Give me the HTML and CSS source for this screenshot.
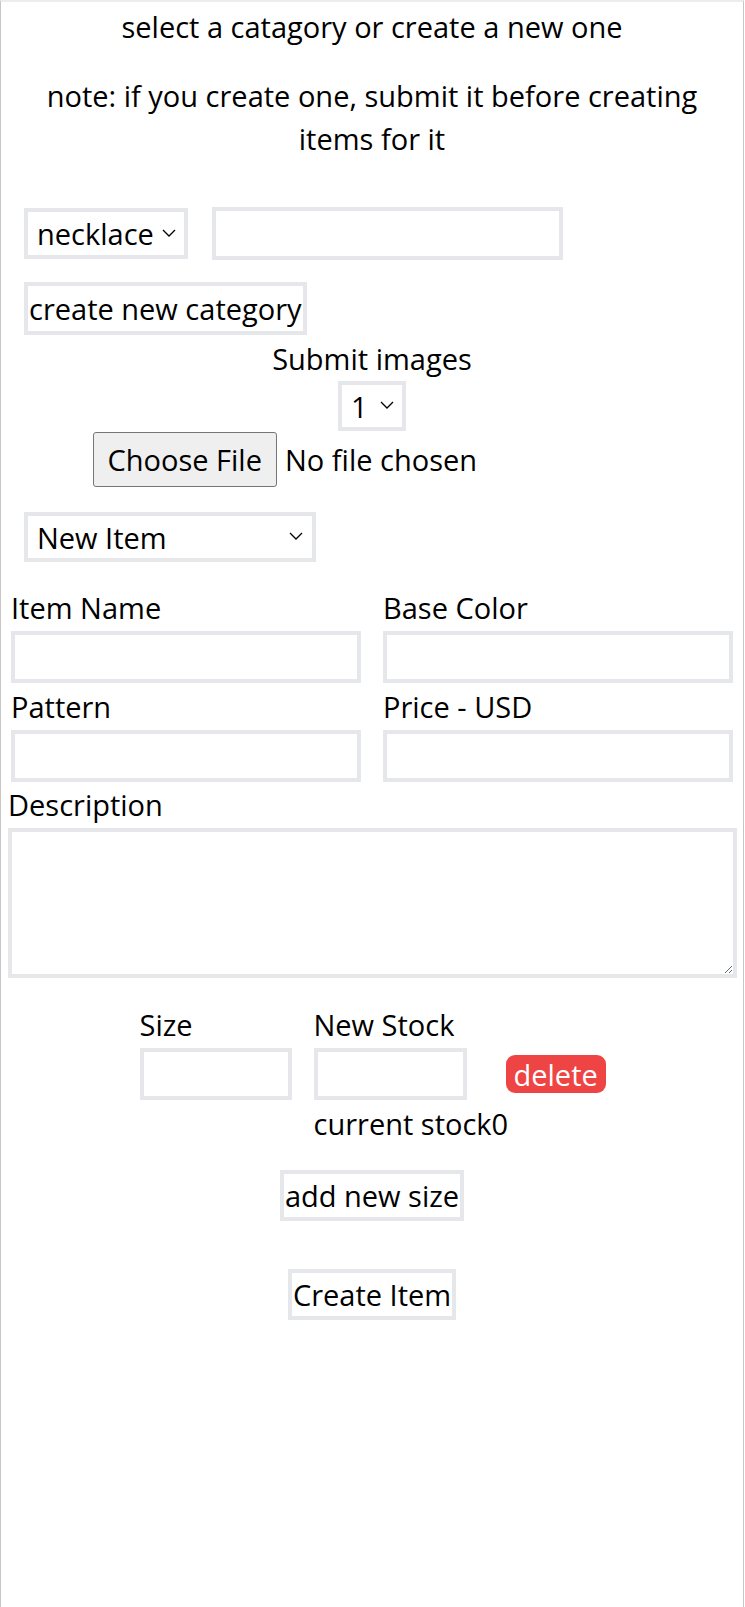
FILE: index.html
```html
<!DOCTYPE html>
<html lang="en">
<head>
<meta charset="utf-8">
<title>Create item</title>
<link rel="stylesheet" href="styles.css">
</head>
<body>
<div class="page">
  <p class="title">select a catagory or create a new one</p>
  <p class="note">note: if you create one, submit it before creating items for it</p>

  <div class="cat-row">
    <span class="select-wrap">
      <select class="field select select-cat"><option>necklace</option></select>
      <svg class="chev" width="14" height="8" viewBox="0 0 14 8" aria-hidden="true"><path d="M1 1 L7 7 L13 1" fill="none" stroke="#000" stroke-width="1.3"/></svg>
    </span>
    <input class="field input-cat" type="text">
  </div>
  <div class="left-row">
    <button class="btn btn-create" type="button">create new category</button>
  </div>

  <div class="images">
    <div class="images-label">Submit images</div>
    <span class="select-wrap num-wrap">
      <select class="field select select-num"><option>1</option></select>
      <svg class="chev" width="14" height="8" viewBox="0 0 14 8" aria-hidden="true"><path d="M1 1 L7 7 L13 1" fill="none" stroke="#000" stroke-width="1.3"/></svg>
    </span>
    <input class="file" type="file">
  </div>

  <div class="left-row item-row">
    <span class="select-wrap">
      <select class="field select select-item"><option>New Item</option></select>
      <svg class="chev chev-item" width="14" height="8" viewBox="0 0 14 8" aria-hidden="true"><path d="M1 1 L7 7 L13 1" fill="none" stroke="#000" stroke-width="1.3"/></svg>
    </span>
  </div>

  <div class="grid">
    <div class="cell"><label class="lbl">Item Name</label><input class="field" type="text"></div>
    <div class="cell"><label class="lbl">Base Color</label><input class="field" type="text"></div>
    <div class="cell"><label class="lbl">Pattern</label><input class="field" type="text"></div>
    <div class="cell"><label class="lbl">Price - USD</label><input class="field" type="text"></div>
  </div>

  <div class="desc">
    <label class="lbl">Description</label>
    <textarea class="field textarea"></textarea>
  </div>

  <div class="sizes">
    <label class="lbl">Size</label>
    <label class="lbl">New Stock</label>
    <span></span>
    <input class="field size-input" type="text">
    <input class="field stock-input" type="text">
    <button class="delete" type="button">delete</button>
    <span></span>
    <span class="current">current stock0</span>
    <span></span>
  </div>

  <div class="center-row add-row">
    <button class="btn" type="button">add new size</button>
  </div>
  <div class="center-row submit-row">
    <button class="btn" type="button">Create Item</button>
  </div>
</div>
</body>
</html>
```

FILE: styles.css
```css
html, body {
  margin: 0;
  padding: 0;
  background: #fff;
}

body {
  font-family: "Open Sans", "Noto Sans", sans-serif;
  font-size: 29px;
  color: #000;
}

.page {
  box-sizing: border-box;
  width: 744px;
  min-height: 100vh;
  border-top: 2px solid #ececec;
  border-left: 1px solid #c6c6c6;
  border-right: 1px solid #c6c6c6;
  display: flex;
  flex-direction: column;
}

.title {
  margin: 3px 0 0;
  line-height: 43px;
  text-align: center;
}

.note {
  margin: 26px 15px 0;
  line-height: 43px;
  text-align: center;
}

.field {
  box-sizing: border-box;
  font: inherit;
  color: #000;
  background: #fff;
  border: 4px solid #e6e7eb;
  border-radius: 0;
  margin: 0;
  padding: 0 8px;
  outline: none;
}

.select {
  appearance: none;
  -webkit-appearance: none;
  padding: 0 30px 0 9px;
}

.select-wrap {
  position: relative;
  display: inline-flex;
}

.chev {
  position: absolute;
  right: 12px;
  top: 50%;
  margin-top: -5px;
  pointer-events: none;
}

.chev-item {
  right: 13px;
}

.cat-row {
  margin-top: 47px;
  padding-left: 23px;
  display: flex;
  align-items: center;
  gap: 24px;
}

.select-cat {
  width: 164px;
  height: 51px;
}

.input-cat {
  width: 351px;
  height: 53px;
}

.left-row {
  padding-left: 23px;
  display: flex;
}

.btn {
  box-sizing: border-box;
  font: inherit;
  color: #000;
  background: #fff;
  border: 4px solid #e6e7eb;
  border-radius: 0;
  padding: 0 1px;
  margin: 0;
}

.btn-create {
  margin-top: 22px;
  height: 53px;
}

.images {
  display: flex;
  flex-direction: column;
  align-items: center;
}

.images-label {
  margin-top: 4px;
  line-height: 40px;
}

.num-wrap {
  margin-top: 2px;
}

.select-num {
  width: 68px;
  height: 50px;
}

.file {
  display: block;
  margin-top: 1px;
  width: 559px;
  height: 55px;
  font: inherit;
  color: #000;
}

.file::file-selector-button {
  font: inherit;
  color: #000;
  height: 55px;
  padding: 0 14px;
  margin: 0 8px 0 0;
  background: #efefef;
  border: 1px solid #767676;
  border-radius: 3px;
}

.item-row {
  margin-top: 25px;
}

.select-item {
  width: 292px;
  height: 50px;
}

.grid {
  margin-top: 26px;
  padding: 0 10px;
  display: grid;
  grid-template-columns: 1fr 1fr;
  column-gap: 22px;
  row-gap: 4px;
}

.cell {
  display: flex;
  flex-direction: column;
  gap: 3px;
}

.cell .field {
  height: 52px;
  width: 100%;
}

.lbl {
  display: block;
  line-height: 40px;
}

.desc {
  margin-top: 3px;
  padding: 0 6px 0 7px;
  display: flex;
  flex-direction: column;
  gap: 3px;
}

.textarea {
  display: block;
  width: 100%;
  height: 150px;
  resize: vertical;
}

.sizes {
  margin-top: 27px;
  display: grid;
  grid-template-columns: 152px 170px 99px;
  column-gap: 22px;
  justify-content: center;
  align-items: center;
}

.sizes .lbl {
  align-self: end;
}

.size-input,
.stock-input {
  margin-top: 3px;
  height: 52px;
}

.size-input {
  width: 152px;
}

.stock-input {
  width: 153px;
}

.delete {
  margin-top: 3px;
  font: inherit;
  color: #fff;
  background: #ef4444;
  border: none;
  border-radius: 9px;
  height: 38px;
  padding: 0 8px;
  justify-self: start;
}

.current {
  margin-top: 4px;
  line-height: 40px;
  white-space: nowrap;
}

.center-row {
  display: flex;
  justify-content: center;
}

.center-row .btn {
  height: 51px;
}

.add-row {
  margin-top: 26px;
}

.submit-row {
  margin-top: 48px;
}
```
